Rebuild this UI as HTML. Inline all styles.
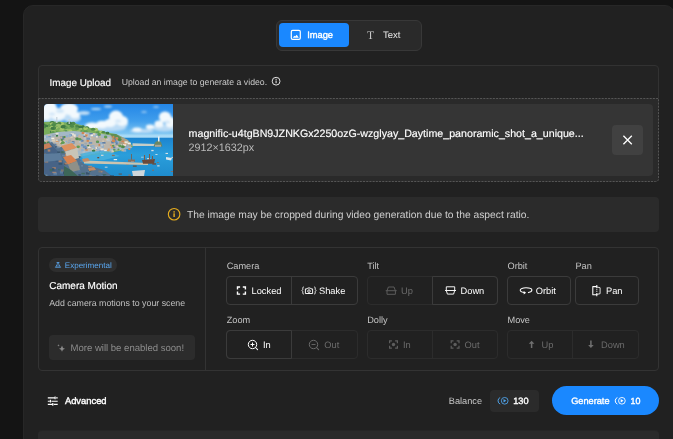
<!DOCTYPE html>
<html lang="en">
<head>
<meta charset="utf-8">
<title>Image to Video</title>
<style>
*{box-sizing:border-box;margin:0;padding:0}
html,body{width:673px;height:439px;overflow:hidden;background:#141414}
body{position:relative;font-family:"Liberation Sans",sans-serif;color:#fff;-webkit-font-smoothing:antialiased;text-rendering:geometricPrecision}
#root{position:absolute;left:0;top:0;width:673px;height:439px;will-change:transform}
.abs{position:absolute}
.t{position:absolute;white-space:nowrap;line-height:14px;height:14px;margin-top:-7px}
#panel{left:23px;top:5px;width:652px;height:450px;background:#212121;border:1px solid #272727;border-radius:10px}
#toggle{left:276px;top:20px;width:146px;height:31px;background:#2a2a2a;border:1px solid #383838;border-radius:6px}
#tg-img{left:279px;top:23px;width:70px;height:24px;background:#1a88ff;border-radius:4px}
#upl{left:38px;top:65px;width:621px;height:117px;border:1px solid #323232;border-radius:4px;background:#232323}
#drop{left:38px;top:98px;width:621px;height:84px;border-radius:0 0 4px 4px;background:#2a2a2a}
#file{left:44px;top:104px;width:609px;height:72px;background:#353535;border-radius:4px;overflow:hidden}
#close{left:612px;top:125px;width:31px;height:30px;background:#414141;border-radius:4px}
#warn{left:38px;top:197px;width:621px;height:35px;background:#2b2b2b;border-radius:4px}
#cam{left:38px;top:247px;width:621px;height:124px;border:1px solid #333;border-radius:4px}
#camdiv{left:205px;top:247px;width:1px;height:124px;background:#333}
#pill{left:49px;top:258px;width:68px;height:14px;background:#2e2e2e;border-radius:7px}
#more{left:49px;top:335px;width:146px;height:25px;background:#2c2c2c;border-radius:4px}
.grp{position:absolute;height:29px;border:1px solid #3b3b3b;border-radius:4px}
.grp.dis{border-color:#2c2c2c}
.m{-webkit-text-stroke:0.15px currentColor}
.sb{-webkit-text-stroke:0.38px currentColor}
.lbl{color:#c4c4c4;font-size:9.2px}
.bt{font-size:9.3px;color:#fff}
.bt.d{color:#6b6b6b}
#bal{left:490px;top:390px;width:49px;height:22px;background:#2b2b2b;border-radius:4px}
#gen{left:552px;top:386px;width:107px;height:29px;background:#1a88ff;border-radius:15px}
#next{left:38px;top:430px;width:621px;height:20px;background:#2a2a2a;border-top:1px solid #252525;border-radius:4px}
</style>
</head>
<body>
<div id="root">
<div id="panel" class="abs"></div>

<div id="toggle" class="abs"></div>
<div id="tg-img" class="abs"></div>
<span class="t sb" style="left:307.2px;top:34.5px;font-size:9.3px">Image</span>
<span class="t" style="left:383px;top:35.5px;font-size:9.5px;color:#e6e6e6">Text</span>

<div id="upl" class="abs"></div>
<div id="drop" class="abs"></div>
<svg class="abs" style="left:38px;top:98px" width="621" height="84" viewBox="0 0 621 84" fill="none"><path d="M0.5 0.5 H620.5 V80.5 Q620.5 83.5 617.5 83.5 H3.5 Q0.5 83.5 0.5 80.5Z" stroke="#555" stroke-width="1" stroke-dasharray="2 1.2"/></svg>
<span class="t m" style="left:49.5px;top:83.5px;font-size:9.9px">Image Upload</span>
<span class="t" style="left:121.7px;top:82.3px;font-size:8.72px;color:#c9c9c9">Upload an image to generate a video.</span>

<div id="file" class="abs">
<svg class="abs" style="left:0;top:0" width="129" height="72" viewBox="0 0 129 72">
<defs>
<linearGradient id="sky" x1="0" y1="0" x2="0" y2="1"><stop offset="0" stop-color="#2486e6"/><stop offset="0.5" stop-color="#409eec"/><stop offset="0.85" stop-color="#7cc4f2"/><stop offset="1" stop-color="#a4daf6"/></linearGradient>
<linearGradient id="sea" x1="0" y1="0" x2="0" y2="1"><stop offset="0" stop-color="#1c84d0"/><stop offset="0.45" stop-color="#2a9edb"/><stop offset="1" stop-color="#1f8ccd"/></linearGradient>
<filter id="b1" x="-20%" y="-20%" width="140%" height="140%"><feGaussianBlur stdDeviation="0.8"/></filter>
<filter id="b2" x="-20%" y="-20%" width="140%" height="140%"><feGaussianBlur stdDeviation="0.4"/></filter>
</defs>
<rect width="129" height="34" fill="url(#sky)"/>
<rect y="33.6" width="129" height="38.4" fill="url(#sea)"/>
<g filter="url(#b1)">
<g fill="#bcdcf5">
<ellipse cx="8" cy="14" rx="13" ry="5"/><ellipse cx="28" cy="14" rx="9" ry="4.5"/><ellipse cx="40" cy="9" rx="6" ry="2"/>
<ellipse cx="62" cy="24" rx="20" ry="3.5"/><ellipse cx="74" cy="20" rx="10" ry="5"/><ellipse cx="52" cy="5" rx="5" ry="1"/><ellipse cx="64" cy="2.5" rx="4" ry="1"/>
<ellipse cx="120" cy="24" rx="12" ry="3.5"/><ellipse cx="98" cy="27" rx="12" ry="2"/><ellipse cx="100" cy="8" rx="3" ry=".8"/><ellipse cx="112" cy="3" rx="3" ry=".8"/>
</g>
<g fill="#f3f9fd">
<ellipse cx="5" cy="5" rx="8" ry="8"/><ellipse cx="14" cy="10" rx="8" ry="6"/><ellipse cx="25" cy="5" rx="9" ry="6"/><ellipse cx="31" cy="11" rx="5" ry="3.5"/><ellipse cx="2" cy="12" rx="5" ry="4"/>
<ellipse cx="72" cy="13" rx="7" ry="6.5"/><ellipse cx="78" cy="17" rx="6" ry="5"/><ellipse cx="66" cy="19" rx="6" ry="4"/><ellipse cx="58" cy="20.5" rx="6" ry="3.8"/><ellipse cx="48" cy="22" rx="7" ry="3.6"/>
<ellipse cx="121" cy="13" rx="6" ry="5.5"/><ellipse cx="126" cy="18" rx="5" ry="5.5"/><ellipse cx="115" cy="20" rx="4.5" ry="3.5"/><ellipse cx="106" cy="23" rx="4" ry="2.4"/><ellipse cx="93" cy="25.5" rx="4.5" ry="2"/>
</g>
<g fill="#c9e2f6" opacity=".8"><ellipse cx="16" cy="7" rx="4" ry="2"/><ellipse cx="8" cy="10" rx="3" ry="1.6"/><ellipse cx="74" cy="17" rx="3" ry="1.6"/><ellipse cx="123" cy="18" rx="3" ry="1.5"/></g>
</g>
<g filter="url(#b2)">
<rect x="60" y="30.5" width="69" height="3" fill="#b4e0f7" opacity=".6"/>
<path d="M0 18 L10 17.5 L30 19 L40 22 L50 25 L60 28 L72 30 L80 34 L86 38 L89 43 L80 46 L60 50 L40 52 L0 55Z" fill="#7aad5c"/>
<ellipse cx="32.9" cy="23.2" rx="2.1" ry="1.5" fill="#6daa5a"/><ellipse cx="39.5" cy="23.1" rx="1.6" ry="1.1" fill="#96bc68"/><ellipse cx="58.7" cy="29.8" rx="1.8" ry="1.2" fill="#96bc68"/><ellipse cx="8.2" cy="18.7" rx="2.5" ry="1.8" fill="#3f7a44"/><ellipse cx="36.8" cy="23.5" rx="2.5" ry="1.7" fill="#3f7a44"/><ellipse cx="43.1" cy="23.5" rx="1.7" ry="1.2" fill="#3f7a44"/><ellipse cx="8.7" cy="23.7" rx="1.9" ry="1.3" fill="#96bc68"/><ellipse cx="38.1" cy="26.9" rx="2.5" ry="1.8" fill="#4f8a4a"/><ellipse cx="38.2" cy="25.5" rx="1.4" ry="1.0" fill="#6daa5a"/><ellipse cx="0.0" cy="20.7" rx="1.6" ry="1.1" fill="#3f7a44"/><ellipse cx="12.0" cy="23.6" rx="1.8" ry="1.3" fill="#a8c86c"/><ellipse cx="27.8" cy="22.3" rx="2.0" ry="1.4" fill="#4f8a4a"/><ellipse cx="21.4" cy="23.8" rx="1.6" ry="1.1" fill="#3f7a44"/><ellipse cx="14.5" cy="21.4" rx="2.5" ry="1.7" fill="#4f8a4a"/><ellipse cx="24.8" cy="24.1" rx="1.4" ry="1.0" fill="#6daa5a"/><ellipse cx="7.4" cy="27.9" rx="1.6" ry="1.1" fill="#3f7a44"/><ellipse cx="9.4" cy="27.4" rx="2.5" ry="1.8" fill="#96bc68"/><ellipse cx="29.1" cy="19.5" rx="2.4" ry="1.7" fill="#4f8a4a"/><ellipse cx="12.7" cy="20.5" rx="2.1" ry="1.5" fill="#3f7a44"/><ellipse cx="26.1" cy="26.9" rx="2.4" ry="1.7" fill="#a8c86c"/><ellipse cx="15.8" cy="19.0" rx="2.1" ry="1.5" fill="#96bc68"/><ellipse cx="37.0" cy="25.0" rx="1.3" ry="0.9" fill="#a8c86c"/><ellipse cx="41.1" cy="25.1" rx="1.8" ry="1.3" fill="#a8c86c"/><ellipse cx="6.1" cy="21.3" rx="2.3" ry="1.6" fill="#5f9a52"/><ellipse cx="12.6" cy="28.0" rx="1.2" ry="0.9" fill="#5f9a52"/><ellipse cx="38.9" cy="26.7" rx="1.7" ry="1.2" fill="#6daa5a"/><ellipse cx="7.8" cy="23.5" rx="2.1" ry="1.5" fill="#a8c86c"/><ellipse cx="54.1" cy="28.8" rx="2.3" ry="1.6" fill="#5f9a52"/><ellipse cx="18.2" cy="25.2" rx="2.4" ry="1.7" fill="#a8c86c"/><ellipse cx="41.8" cy="27.7" rx="2.0" ry="1.4" fill="#5f9a52"/><ellipse cx="22.8" cy="26.1" rx="2.1" ry="1.4" fill="#96bc68"/><ellipse cx="8.0" cy="19.7" rx="2.1" ry="1.5" fill="#a8c86c"/><ellipse cx="10.2" cy="21.7" rx="1.3" ry="0.9" fill="#3f7a44"/><ellipse cx="57.4" cy="28.1" rx="2.3" ry="1.6" fill="#a8c86c"/><ellipse cx="34.9" cy="26.8" rx="1.9" ry="1.3" fill="#96bc68"/><ellipse cx="17.8" cy="19.4" rx="2.2" ry="1.5" fill="#a8c86c"/><ellipse cx="28.7" cy="22.5" rx="1.5" ry="1.1" fill="#4f8a4a"/><ellipse cx="9.0" cy="28.3" rx="2.0" ry="1.4" fill="#5f9a52"/><ellipse cx="10.1" cy="23.8" rx="2.2" ry="1.6" fill="#4f8a4a"/><ellipse cx="0.2" cy="23.1" rx="1.9" ry="1.4" fill="#4f8a4a"/><ellipse cx="27.5" cy="21.5" rx="1.8" ry="1.3" fill="#4f8a4a"/><ellipse cx="15.9" cy="21.6" rx="2.5" ry="1.8" fill="#a8c86c"/><ellipse cx="15.3" cy="19.4" rx="2.0" ry="1.4" fill="#4f8a4a"/><ellipse cx="51.6" cy="25.5" rx="2.5" ry="1.7" fill="#a8c86c"/><ellipse cx="14.9" cy="22.7" rx="1.3" ry="0.9" fill="#96bc68"/><ellipse cx="24.3" cy="19.8" rx="2.0" ry="1.4" fill="#5f9a52"/><ellipse cx="33.6" cy="23.0" rx="2.0" ry="1.4" fill="#3f7a44"/><ellipse cx="33.1" cy="24.4" rx="2.1" ry="1.5" fill="#5f9a52"/><ellipse cx="12.7" cy="20.9" rx="1.8" ry="1.2" fill="#6daa5a"/><ellipse cx="25.3" cy="19.3" rx="2.5" ry="1.8" fill="#3f7a44"/><ellipse cx="9.6" cy="20.6" rx="2.4" ry="1.7" fill="#4f8a4a"/><ellipse cx="1.4" cy="21.8" rx="1.7" ry="1.2" fill="#4f8a4a"/><ellipse cx="42.6" cy="24.3" rx="1.5" ry="1.0" fill="#a8c86c"/><ellipse cx="21.9" cy="23.4" rx="2.0" ry="1.4" fill="#5f9a52"/><ellipse cx="36.2" cy="25.2" rx="1.6" ry="1.1" fill="#96bc68"/><ellipse cx="14.3" cy="21.2" rx="2.2" ry="1.5" fill="#96bc68"/><ellipse cx="9.6" cy="24.8" rx="1.7" ry="1.2" fill="#4f8a4a"/><ellipse cx="20.4" cy="22.2" rx="1.5" ry="1.1" fill="#4f8a4a"/><ellipse cx="59.4" cy="28.2" rx="1.9" ry="1.3" fill="#4f8a4a"/><ellipse cx="20.9" cy="27.1" rx="2.5" ry="1.7" fill="#5f9a52"/><ellipse cx="39.1" cy="22.3" rx="1.4" ry="1.0" fill="#3f7a44"/><ellipse cx="16.4" cy="26.5" rx="1.3" ry="0.9" fill="#96bc68"/><ellipse cx="8.4" cy="24.4" rx="1.9" ry="1.3" fill="#3f7a44"/><ellipse cx="19.9" cy="27.6" rx="1.5" ry="1.1" fill="#96bc68"/><ellipse cx="63.5" cy="29.1" rx="1.9" ry="1.3" fill="#3f7a44"/><ellipse cx="49.1" cy="25.3" rx="2.2" ry="1.5" fill="#4f8a4a"/><ellipse cx="19.0" cy="22.7" rx="2.4" ry="1.7" fill="#3f7a44"/><ellipse cx="32.8" cy="21.9" rx="1.6" ry="1.1" fill="#4f8a4a"/><ellipse cx="2.5" cy="21.9" rx="1.7" ry="1.2" fill="#3f7a44"/><ellipse cx="18.3" cy="27.0" rx="1.5" ry="1.0" fill="#96bc68"/>
<path d="M0 31 L14 28 L30 27 L45 28.5 L58 30 L68 31.5 L78 35 L85 39 L88 44 L70 47 L52 49 L40 52 L0 52Z" fill="#a4b8c6"/>
<path d="M8 33 L26 31 L40 32 L60 34 L75 37 L82 42 L60 46 L40 47 L10 44Z" fill="#c4b49e" opacity=".7"/>
<path d="M66 30.5 L74 31 L84 36 L88 42 L78 44 L70 40Z" fill="#a9a28c"/>
<path d="M66 30 l6 0 l6 4 l-8 1z" fill="#5f8f55"/>
<rect x="39.8" y="41.0" width="3.4" height="1.9" fill="#9aa9b4"/><rect x="70.7" y="38.9" width="2.8" height="1.5" fill="#f2efe8"/><rect x="26.7" y="29.3" width="3.2" height="2.2" fill="#e9e4d8"/><rect x="52.4" y="36.9" width="2.5" height="2.2" fill="#5f7fa6"/><rect x="16.7" y="33.0" width="1.7" height="1.8" fill="#f2efe8"/><rect x="52.0" y="31.9" width="2.1" height="1.6" fill="#e9e4d8"/><rect x="58.3" y="38.4" width="2.2" height="2.6" fill="#d9cdb8"/><rect x="62.3" y="34.9" width="2.1" height="1.6" fill="#d9cdb8"/><rect x="49.6" y="29.7" width="1.8" height="1.6" fill="#d9cdb8"/><rect x="0.0" y="32.2" width="3.4" height="1.9" fill="#b8c4cc"/><rect x="36.9" y="41.2" width="2.0" height="2.1" fill="#8fb0cf"/><rect x="7.7" y="35.3" width="3.5" height="2.3" fill="#d9cdb8"/><rect x="1.0" y="38.6" width="2.6" height="2.2" fill="#d99660"/><rect x="39.4" y="31.8" width="3.1" height="1.4" fill="#5f7fa6"/><rect x="33.8" y="36.9" width="3.6" height="1.2" fill="#c9b59a"/><rect x="18.5" y="36.9" width="3.3" height="2.1" fill="#d9cdb8"/><rect x="3.7" y="30.7" width="2.5" height="1.2" fill="#c9b59a"/><rect x="28.9" y="34.4" width="1.7" height="1.3" fill="#c9b59a"/><rect x="32.4" y="42.6" width="1.9" height="2.0" fill="#c9b59a"/><rect x="11.9" y="36.7" width="2.9" height="1.6" fill="#d99660"/><rect x="72.0" y="33.2" width="2.0" height="2.2" fill="#9aa9b4"/><rect x="77.6" y="42.1" width="2.4" height="1.3" fill="#e9e4d8"/><rect x="45.1" y="33.4" width="3.1" height="1.7" fill="#b8c4cc"/><rect x="72.5" y="41.9" width="2.2" height="1.4" fill="#d9cdb8"/><rect x="11.1" y="39.0" width="2.9" height="2.1" fill="#d9cdb8"/><rect x="23.7" y="38.1" width="1.7" height="1.4" fill="#8fb0cf"/><rect x="8.1" y="30.5" width="2.5" height="1.7" fill="#9aa9b4"/><rect x="51.4" y="30.5" width="1.7" height="1.2" fill="#8fb0cf"/><rect x="1.9" y="42.9" width="2.6" height="2.2" fill="#8fb0cf"/><rect x="12.0" y="28.8" width="2.5" height="1.7" fill="#e9e4d8"/><rect x="79.2" y="45.4" width="3.0" height="2.3" fill="#8fb0cf"/><rect x="31.0" y="44.1" width="3.4" height="2.4" fill="#b8c4cc"/><rect x="58.3" y="36.5" width="1.6" height="1.3" fill="#d9cdb8"/><rect x="77.4" y="45.2" width="2.4" height="2.2" fill="#c9b59a"/><rect x="40.3" y="38.6" width="2.7" height="1.9" fill="#9aa9b4"/><rect x="2.6" y="42.0" width="2.6" height="1.5" fill="#d9cdb8"/><rect x="43.8" y="42.4" width="3.4" height="1.6" fill="#e9e4d8"/><rect x="32.4" y="30.6" width="2.8" height="1.9" fill="#8fb0cf"/><rect x="58.1" y="38.0" width="3.4" height="1.7" fill="#5f7fa6"/><rect x="22.1" y="42.9" width="3.2" height="2.3" fill="#d99660"/><rect x="77.5" y="36.6" width="2.8" height="1.6" fill="#cf8554"/><rect x="11.8" y="35.8" width="3.4" height="1.3" fill="#d9cdb8"/><rect x="14.9" y="38.3" width="2.2" height="1.5" fill="#b8c4cc"/><rect x="33.7" y="40.0" width="2.9" height="2.2" fill="#c9b59a"/><rect x="39.8" y="28.9" width="1.7" height="2.4" fill="#e9e4d8"/><rect x="59.7" y="34.0" width="2.3" height="2.1" fill="#c9b59a"/><rect x="55.4" y="38.2" width="2.9" height="2.1" fill="#8fb0cf"/><rect x="84.3" y="44.1" width="2.0" height="1.9" fill="#cf8554"/><rect x="62.9" y="45.9" width="2.7" height="1.3" fill="#d99660"/><rect x="24.0" y="35.6" width="3.0" height="1.9" fill="#c9b59a"/><rect x="74.7" y="44.5" width="2.0" height="1.8" fill="#b8c4cc"/><rect x="11.4" y="38.3" width="2.9" height="2.5" fill="#b8c4cc"/><rect x="48.4" y="43.3" width="2.6" height="2.3" fill="#8fb0cf"/><rect x="40.8" y="43.3" width="2.0" height="2.2" fill="#5f7fa6"/><rect x="21.3" y="36.8" width="1.8" height="1.6" fill="#8fb0cf"/><rect x="1.4" y="39.6" width="1.7" height="1.7" fill="#b8c4cc"/><rect x="67.6" y="39.2" width="1.7" height="2.3" fill="#d9cdb8"/><rect x="37.7" y="27.9" width="2.7" height="2.2" fill="#cf8554"/><rect x="79.2" y="40.0" width="3.0" height="1.8" fill="#f2efe8"/><rect x="50.9" y="44.2" width="3.1" height="1.8" fill="#9aa9b4"/><rect x="56.2" y="40.1" width="3.3" height="2.0" fill="#6f93bd"/><rect x="76.6" y="42.2" width="2.2" height="1.4" fill="#9aa9b4"/><rect x="46.1" y="41.3" width="2.0" height="2.0" fill="#9aa9b4"/><rect x="0.4" y="36.4" width="2.7" height="1.3" fill="#b8c4cc"/><rect x="10.7" y="29.3" width="1.9" height="2.5" fill="#f2efe8"/><rect x="41.6" y="30.2" width="2.5" height="2.3" fill="#f2efe8"/><rect x="46.2" y="29.7" width="2.4" height="1.2" fill="#6f93bd"/><rect x="2.0" y="31.9" width="2.1" height="2.2" fill="#8fb0cf"/><rect x="63.7" y="33.1" width="2.6" height="1.9" fill="#c9b59a"/><rect x="10.8" y="39.8" width="2.1" height="1.5" fill="#9aa9b4"/><rect x="55.7" y="47.6" width="2.8" height="2.0" fill="#5f7fa6"/><rect x="47.0" y="32.5" width="2.0" height="2.0" fill="#c9b59a"/><rect x="65.2" y="47.3" width="3.4" height="1.6" fill="#8fb0cf"/><rect x="68.5" y="31.9" width="1.8" height="2.4" fill="#cf8554"/><rect x="63.9" y="33.5" width="1.8" height="2.4" fill="#b8c4cc"/><rect x="47.8" y="44.6" width="2.0" height="2.1" fill="#e9e4d8"/><rect x="8.5" y="41.2" width="2.3" height="2.3" fill="#8fb0cf"/><rect x="10.2" y="39.6" width="3.1" height="1.9" fill="#5f7fa6"/><rect x="67.1" y="42.3" width="3.4" height="1.9" fill="#d99660"/><rect x="16.2" y="32.1" width="3.3" height="2.6" fill="#5f7fa6"/><rect x="83.7" y="38.6" width="3.1" height="1.7" fill="#f2efe8"/><rect x="37.5" y="35.9" width="2.0" height="1.7" fill="#5f7fa6"/><rect x="16.0" y="38.3" width="3.1" height="1.8" fill="#d99660"/><rect x="69.7" y="35.1" width="1.8" height="2.4" fill="#5f7fa6"/><rect x="82.7" y="41.2" width="2.0" height="2.0" fill="#8fb0cf"/><rect x="70.8" y="33.5" width="3.4" height="2.2" fill="#cf8554"/><rect x="71.7" y="37.1" width="3.4" height="2.4" fill="#8fb0cf"/><rect x="67.5" y="46.1" width="2.4" height="2.2" fill="#d9cdb8"/><rect x="70.2" y="34.5" width="1.8" height="2.4" fill="#5f7fa6"/><rect x="26.3" y="32.4" width="2.4" height="1.5" fill="#d9cdb8"/><rect x="56.5" y="44.5" width="3.1" height="2.6" fill="#e9e4d8"/><rect x="10.1" y="29.7" width="2.1" height="1.8" fill="#9aa9b4"/><rect x="4.4" y="31.9" width="2.4" height="1.3" fill="#6f93bd"/><rect x="24.3" y="35.5" width="2.7" height="1.8" fill="#9aa9b4"/><rect x="56.1" y="47.2" width="1.8" height="2.0" fill="#e9e4d8"/><rect x="75.3" y="40.5" width="2.8" height="1.8" fill="#f2efe8"/><rect x="37.0" y="40.2" width="2.8" height="1.7" fill="#6f93bd"/><rect x="42.5" y="33.7" width="3.5" height="2.1" fill="#6f93bd"/><rect x="51.6" y="42.8" width="2.4" height="2.2" fill="#e9e4d8"/><rect x="79.7" y="37.7" width="2.6" height="2.6" fill="#d99660"/><rect x="4.4" y="37.4" width="1.8" height="2.4" fill="#8fb0cf"/><rect x="46.5" y="30.1" width="2.5" height="2.1" fill="#f2efe8"/><rect x="52.9" y="43.0" width="3.0" height="1.7" fill="#9aa9b4"/><rect x="25.5" y="30.2" width="2.6" height="1.9" fill="#6f93bd"/><rect x="69.0" y="42.6" width="2.3" height="1.6" fill="#5f7fa6"/><rect x="63.8" y="44.5" width="2.0" height="1.6" fill="#d99660"/><rect x="16.7" y="33.2" width="3.6" height="2.5" fill="#5f7fa6"/><rect x="23.8" y="37.6" width="2.8" height="1.3" fill="#9aa9b4"/><rect x="42.6" y="35.9" width="2.3" height="1.9" fill="#cf8554"/><rect x="54.9" y="46.2" width="2.0" height="1.8" fill="#6f93bd"/><rect x="34.3" y="30.8" width="1.9" height="2.4" fill="#c9b59a"/><rect x="28.6" y="40.7" width="3.1" height="2.5" fill="#b8c4cc"/><rect x="57.5" y="41.5" width="2.5" height="1.7" fill="#9aa9b4"/><rect x="7.3" y="41.1" width="2.6" height="2.2" fill="#6f93bd"/><rect x="53.1" y="44.4" width="2.6" height="2.3" fill="#8fb0cf"/><rect x="24.9" y="30.6" width="2.3" height="2.2" fill="#8fb0cf"/><rect x="38.8" y="41.9" width="3.4" height="2.2" fill="#6f93bd"/><rect x="38.5" y="47.1" width="2.2" height="1.6" fill="#b8c4cc"/><rect x="45.4" y="29.1" width="3.3" height="1.2" fill="#5f7fa6"/><rect x="34.8" y="36.7" width="2.0" height="2.0" fill="#b8c4cc"/><rect x="47.6" y="47.9" width="2.7" height="1.4" fill="#f2efe8"/><rect x="2.0" y="39.9" width="2.7" height="2.0" fill="#e9e4d8"/><rect x="57.3" y="47.1" width="1.7" height="2.0" fill="#9aa9b4"/><rect x="7.5" y="42.9" width="1.9" height="2.2" fill="#5f7fa6"/><rect x="37.1" y="44.8" width="2.6" height="2.5" fill="#8fb0cf"/><rect x="67.3" y="36.9" width="2.3" height="2.6" fill="#5f7fa6"/><rect x="12.0" y="39.2" width="3.2" height="1.3" fill="#c9b59a"/><rect x="80.5" y="37.3" width="3.3" height="2.1" fill="#e9e4d8"/><rect x="56.3" y="40.1" width="3.0" height="2.3" fill="#b8c4cc"/><rect x="21.6" y="31.1" width="2.9" height="2.2" fill="#8fb0cf"/><rect x="18.0" y="37.6" width="2.2" height="2.6" fill="#e9e4d8"/><rect x="41.5" y="45.3" width="2.2" height="1.4" fill="#cf8554"/><rect x="1.5" y="39.0" width="3.2" height="1.6" fill="#d99660"/><rect x="16.2" y="32.4" width="2.1" height="2.2" fill="#c9b59a"/><rect x="44.8" y="38.0" width="3.4" height="1.8" fill="#6f93bd"/><rect x="48.4" y="48.3" width="2.6" height="1.8" fill="#8fb0cf"/><rect x="58.1" y="46.3" width="1.8" height="2.4" fill="#b8c4cc"/><rect x="70.5" y="36.6" width="2.7" height="1.9" fill="#6f93bd"/><rect x="39.6" y="33.2" width="2.4" height="2.4" fill="#b8c4cc"/><rect x="13.8" y="35.0" width="2.1" height="2.4" fill="#9aa9b4"/><rect x="54.5" y="39.9" width="1.7" height="2.0" fill="#cf8554"/><rect x="7.3" y="33.7" width="3.0" height="1.3" fill="#f2efe8"/><rect x="65.9" y="40.6" width="2.6" height="1.2" fill="#d99660"/><rect x="36.7" y="49.9" width="1.8" height="2.4" fill="#d99660"/><rect x="3.3" y="37.3" width="2.6" height="2.5" fill="#6f93bd"/><rect x="27.8" y="37.1" width="2.7" height="2.6" fill="#5f7fa6"/><rect x="62.9" y="36.0" width="3.0" height="1.3" fill="#b8c4cc"/><rect x="59.5" y="45.7" width="3.2" height="1.4" fill="#f2efe8"/><rect x="1.1" y="36.4" width="3.0" height="1.5" fill="#c9b59a"/><rect x="48.9" y="29.2" width="2.0" height="1.7" fill="#d9cdb8"/><rect x="49.5" y="45.1" width="2.3" height="2.4" fill="#d9cdb8"/><rect x="9.0" y="42.5" width="1.9" height="2.1" fill="#cf8554"/><rect x="15.8" y="37.1" width="3.3" height="2.0" fill="#d9cdb8"/><rect x="67.9" y="35.5" width="3.2" height="2.5" fill="#cf8554"/><rect x="57.0" y="46.2" width="3.2" height="1.7" fill="#8fb0cf"/><rect x="81.1" y="42.6" width="3.1" height="2.1" fill="#8fb0cf"/><rect x="58.1" y="42.2" width="1.6" height="1.7" fill="#8fb0cf"/><rect x="27.0" y="38.0" width="2.7" height="1.5" fill="#8fb0cf"/><rect x="53.8" y="31.0" width="3.1" height="2.5" fill="#9aa9b4"/><rect x="20.6" y="42.3" width="2.6" height="2.0" fill="#d99660"/><rect x="55.2" y="31.9" width="1.8" height="1.5" fill="#c9b59a"/><rect x="36.7" y="35.3" width="1.8" height="2.4" fill="#6f93bd"/><rect x="40.7" y="30.1" width="3.5" height="1.4" fill="#c9b59a"/><rect x="47.8" y="41.0" width="2.7" height="1.6" fill="#8fb0cf"/><rect x="52.9" y="30.1" width="3.2" height="1.6" fill="#8fb0cf"/><rect x="21.2" y="41.3" width="3.3" height="1.5" fill="#9aa9b4"/><rect x="71.4" y="38.4" width="2.4" height="2.3" fill="#5f7fa6"/><rect x="54.1" y="43.0" width="3.1" height="1.4" fill="#b8c4cc"/><rect x="41.2" y="30.6" width="2.4" height="2.0" fill="#cf8554"/><rect x="29.6" y="30.3" width="2.1" height="2.5" fill="#e9e4d8"/>
<ellipse cx="33.1" cy="34.8" rx="1.9" ry="1.5" fill="#4f8a4a"/><ellipse cx="49.6" cy="46.8" rx="1.8" ry="1.4" fill="#3f7a44"/><ellipse cx="4.1" cy="38.9" rx="1.6" ry="1.3" fill="#4f8a4a"/><ellipse cx="75.7" cy="35.6" rx="1.9" ry="1.5" fill="#4f8a4a"/><ellipse cx="69.1" cy="41.7" rx="1.3" ry="1.0" fill="#5f9a52"/><ellipse cx="12.9" cy="31.8" rx="1.2" ry="1.0" fill="#3f7a44"/><ellipse cx="18.9" cy="38.4" rx="1.9" ry="1.5" fill="#5f9a52"/><ellipse cx="0.3" cy="38.9" rx="1.8" ry="1.5" fill="#3f7a44"/><ellipse cx="76.0" cy="41.8" rx="1.8" ry="1.4" fill="#5f9a52"/><ellipse cx="29.8" cy="45.7" rx="1.3" ry="1.1" fill="#3f7a44"/><ellipse cx="17.9" cy="35.9" rx="1.2" ry="0.9" fill="#4f8a4a"/><ellipse cx="53.5" cy="37.8" rx="1.6" ry="1.3" fill="#5f9a52"/><ellipse cx="35.7" cy="35.3" rx="1.7" ry="1.3" fill="#5f9a52"/><ellipse cx="20.4" cy="33.0" rx="1.3" ry="1.1" fill="#4f8a4a"/><ellipse cx="78.9" cy="42.8" rx="1.9" ry="1.5" fill="#4f8a4a"/><ellipse cx="70.3" cy="45.7" rx="1.3" ry="1.0" fill="#5f9a52"/><ellipse cx="44.1" cy="41.6" rx="1.0" ry="0.8" fill="#3f7a44"/><ellipse cx="74.5" cy="45.4" rx="1.1" ry="0.8" fill="#5f9a52"/><ellipse cx="34.2" cy="42.8" rx="1.7" ry="1.4" fill="#5f9a52"/><ellipse cx="61.6" cy="33.0" rx="1.7" ry="1.4" fill="#5f9a52"/><ellipse cx="17.6" cy="39.3" rx="1.1" ry="0.9" fill="#5f9a52"/><ellipse cx="55.1" cy="30.5" rx="1.7" ry="1.4" fill="#5f9a52"/>
<rect x="12.2" y="13" width="1.2" height="6" fill="#c8d4dc"/><rect x="24.6" y="15" width="1.2" height="5" fill="#c8d4dc"/>
<path d="M88.5 39.3 L112 40 L113 42 L88.5 42Z" fill="#c4cdc8"/>
<path d="M109.5 42.6 L111 38.5 L114 36.5 L117 38 L118.5 42.6Z" fill="#6a8766"/>
<path d="M111 42.8 l6 0 l0 -2 l-6 0z" fill="#a8a69a"/>
<rect x="114" y="32.5" width="1.5" height="5" fill="#eef2f4"/>
<path d="M36 50 Q50 46 64 47.5 L76 52 L60 56 L40 57Z" fill="#48b2de" opacity=".85"/>
<rect x="103.1" y="54.1" width="3.2" height="1.2" fill="#d8e2e6"/><rect x="121.5" y="48.9" width="2.5" height="1.1" fill="#d8e2e6"/><rect x="57.0" y="50.7" width="2.5" height="1.3" fill="#c9d3d6"/><rect x="60.8" y="62.7" width="2.7" height="1.0" fill="#c9d3d6"/><rect x="87.0" y="56.5" width="2.9" height="1.3" fill="#e8eef0"/><rect x="113.2" y="61.2" width="2.4" height="1.3" fill="#c9d3d6"/><rect x="82.0" y="59.5" width="2.7" height="1.2" fill="#8a6e5c"/><rect x="84.4" y="70.5" width="2.3" height="1.2" fill="#8a6e5c"/><rect x="97.1" y="52.8" width="2.5" height="0.7" fill="#d8e2e6"/><rect x="111.4" y="50.1" width="2.1" height="0.8" fill="#e8eef0"/><rect x="78.8" y="57.9" width="2.5" height="0.8" fill="#8a6e5c"/><rect x="107.3" y="45.9" width="2.3" height="1.3" fill="#d8e2e6"/><rect x="127.4" y="52.9" width="1.9" height="1.0" fill="#c9d3d6"/><rect x="108.2" y="65.6" width="1.7" height="1.2" fill="#8a6e5c"/><rect x="126.8" y="67.1" width="3.3" height="0.9" fill="#8a6e5c"/><rect x="108.3" y="59.3" width="3.7" height="1.3" fill="#6a4a3a"/><rect x="74.6" y="69.6" width="3.3" height="0.9" fill="#6a4a3a"/><rect x="53.3" y="53.0" width="1.9" height="1.3" fill="#6a4a3a"/><rect x="68.1" y="58.7" width="2.2" height="0.8" fill="#d8e2e6"/><rect x="67.9" y="50.8" width="2.8" height="1.3" fill="#8a6e5c"/><rect x="113.0" y="58.2" width="1.8" height="0.8" fill="#8a6e5c"/><rect x="88.9" y="61.5" width="3.8" height="1.2" fill="#6a4a3a"/><rect x="69.7" y="55.0" width="3.4" height="1.2" fill="#e8eef0"/>
<path d="M40 56.5 L104 59 L104 61 L40 59.5Z" fill="#cbc4b0"/>
<path d="M98 56 L111 55 L110 59.8 L99 59.8Z" fill="#6a4a3a"/>
<path d="M100 51 h1 v5 h-1z M105 50 h1 v6 h-1z M108 52 h1 v4 h-1z M87 50 h.8 v6 h-.8z" fill="#7a5a48"/>
<path d="M84 55.5 h7 v2.2 h-7z" fill="#8a6e5c"/>
<path d="M88 67 l13 -1 l-1 6 l-11 0z" fill="#cfd7db"/>
<path d="M122 53 l6 1 l-1 2.4 l-5 -1z" fill="#dfe6ea"/>
<path d="M0 40 L8 38 L14 44 L20 42 L30 47 L36 55 L40 60 L46 62 L60 66 L68 72 L0 72Z" fill="#54728e"/>
<path d="M0 44 L7 40 L16 50 L19 58 L22 72 L0 72Z" fill="#466486"/>
<rect x="25.6" y="60.8" width="2.1" height="1.5" fill="#3a5474" opacity=".8"/><rect x="32.1" y="61.6" width="3.5" height="2.9" fill="#7f9099" opacity=".8"/><rect x="63.5" y="71.6" width="1.6" height="2.5" fill="#5d7fa3" opacity=".8"/><rect x="24.2" y="56.3" width="3.5" height="1.9" fill="#3a5474" opacity=".8"/><rect x="56.6" y="67.1" width="1.9" height="1.3" fill="#c48a64" opacity=".8"/><rect x="54.4" y="66.5" width="2.2" height="1.9" fill="#8a7a68" opacity=".8"/><rect x="52.0" y="71.4" width="2.5" height="2.4" fill="#2f4a62" opacity=".8"/><rect x="19.2" y="67.5" width="2.6" height="2.7" fill="#2f4a62" opacity=".8"/><rect x="15.5" y="54.4" width="2.4" height="1.7" fill="#3a5474" opacity=".8"/><rect x="0.3" y="49.4" width="1.8" height="2.6" fill="#8a7a68" opacity=".8"/><rect x="32.9" y="52.1" width="3.5" height="1.9" fill="#3a5474" opacity=".8"/><rect x="14.6" y="59.0" width="3.6" height="1.7" fill="#31506a" opacity=".8"/><rect x="11.5" y="42.0" width="1.7" height="1.8" fill="#2f4a62" opacity=".8"/><rect x="21.1" y="55.5" width="1.5" height="1.6" fill="#3f6a58" opacity=".8"/><rect x="0.7" y="55.9" width="3.5" height="2.6" fill="#c48a64" opacity=".8"/><rect x="27.2" y="65.3" width="3.6" height="2.6" fill="#5d7fa3" opacity=".8"/><rect x="0.6" y="42.8" width="2.3" height="2.5" fill="#2f4a62" opacity=".8"/><rect x="44.7" y="65.6" width="2.4" height="2.3" fill="#3f6a58" opacity=".8"/><rect x="18.0" y="45.3" width="2.0" height="1.3" fill="#6b8aa8" opacity=".8"/><rect x="37.1" y="61.1" width="1.9" height="1.4" fill="#6b8aa8" opacity=".8"/><rect x="1.5" y="51.6" width="1.6" height="1.4" fill="#2f4a62" opacity=".8"/><rect x="1.4" y="43.9" width="1.7" height="2.3" fill="#3f6a58" opacity=".8"/><rect x="29.2" y="70.7" width="2.0" height="1.9" fill="#6b8aa8" opacity=".8"/><rect x="26.5" y="69.3" width="3.7" height="2.6" fill="#2f4a62" opacity=".8"/><rect x="41.9" y="68.2" width="3.6" height="2.3" fill="#2f4a62" opacity=".8"/><rect x="8.3" y="63.1" width="3.4" height="2.0" fill="#c48a64" opacity=".8"/><rect x="28.5" y="51.1" width="2.1" height="2.3" fill="#3a5474" opacity=".8"/><rect x="31.9" y="71.8" width="3.3" height="1.8" fill="#c48a64" opacity=".8"/><rect x="15.9" y="66.6" width="3.1" height="2.9" fill="#5d7fa3" opacity=".8"/><rect x="17.0" y="65.4" width="2.6" height="2.2" fill="#8a7a68" opacity=".8"/><rect x="13.3" y="47.5" width="3.1" height="1.3" fill="#2f4a62" opacity=".8"/><rect x="30.0" y="63.7" width="3.7" height="1.3" fill="#c48a64" opacity=".8"/><rect x="37.4" y="68.8" width="3.5" height="1.5" fill="#3f6a58" opacity=".8"/><rect x="12.1" y="49.3" width="3.8" height="2.9" fill="#31506a" opacity=".8"/><rect x="12.4" y="51.2" width="3.6" height="2.3" fill="#c48a64" opacity=".8"/><rect x="4.9" y="71.6" width="2.0" height="2.3" fill="#31506a" opacity=".8"/><rect x="38.1" y="71.8" width="2.4" height="2.7" fill="#3f6a58" opacity=".8"/><rect x="57.4" y="70.2" width="3.1" height="1.6" fill="#31506a" opacity=".8"/><rect x="12.3" y="42.4" width="3.2" height="2.0" fill="#6b8aa8" opacity=".8"/><rect x="18.9" y="46.8" width="2.4" height="2.3" fill="#7f9099" opacity=".8"/><rect x="13.3" y="71.8" width="3.2" height="2.5" fill="#3f6a58" opacity=".8"/><rect x="18.1" y="50.7" width="3.0" height="1.7" fill="#6b8aa8" opacity=".8"/><rect x="34.4" y="70.0" width="2.4" height="2.5" fill="#31506a" opacity=".8"/><rect x="8.4" y="67.8" width="3.9" height="1.3" fill="#c48a64" opacity=".8"/><rect x="15.3" y="54.2" width="2.0" height="1.9" fill="#31506a" opacity=".8"/><rect x="28.5" y="47.6" width="2.6" height="2.9" fill="#7f9099" opacity=".8"/><rect x="25.5" y="58.2" width="3.7" height="1.9" fill="#7f9099" opacity=".8"/><rect x="23.2" y="65.9" width="3.6" height="2.3" fill="#2f4a62" opacity=".8"/><rect x="14.2" y="64.9" width="1.5" height="1.3" fill="#3f6a58" opacity=".8"/><rect x="11.6" y="55.2" width="2.7" height="2.4" fill="#3a5474" opacity=".8"/><rect x="66.0" y="71.2" width="4.0" height="1.9" fill="#31506a" opacity=".8"/><rect x="44.2" y="61.8" width="4.0" height="1.3" fill="#c48a64" opacity=".8"/><rect x="44.6" y="64.9" width="3.8" height="2.1" fill="#31506a" opacity=".8"/><rect x="33.8" y="66.2" width="2.8" height="1.4" fill="#5d7fa3" opacity=".8"/><rect x="0.2" y="70.6" width="3.2" height="2.6" fill="#7f9099" opacity=".8"/><rect x="45.1" y="71.0" width="2.7" height="2.8" fill="#8a7a68" opacity=".8"/><rect x="58.5" y="70.1" width="3.7" height="1.2" fill="#3f6a58" opacity=".8"/><rect x="28.1" y="57.1" width="3.9" height="2.6" fill="#5d7fa3" opacity=".8"/><rect x="20.5" y="55.2" width="1.8" height="2.2" fill="#6b8aa8" opacity=".8"/><rect x="21.0" y="50.0" width="2.1" height="2.3" fill="#c48a64" opacity=".8"/><rect x="3.7" y="45.4" width="2.6" height="2.2" fill="#c48a64" opacity=".8"/><rect x="9.4" y="68.6" width="3.5" height="2.1" fill="#6b8aa8" opacity=".8"/><rect x="27.6" y="58.8" width="3.7" height="2.9" fill="#8a7a68" opacity=".8"/><rect x="20.0" y="59.0" width="2.5" height="2.1" fill="#2f4a62" opacity=".8"/><rect x="43.7" y="66.8" width="1.6" height="1.9" fill="#5d7fa3" opacity=".8"/><rect x="14.6" y="56.2" width="3.1" height="2.0" fill="#c48a64" opacity=".8"/><rect x="13.8" y="71.8" width="2.9" height="1.4" fill="#2f4a62" opacity=".8"/><rect x="5.7" y="64.9" width="2.5" height="2.4" fill="#3f6a58" opacity=".8"/><rect x="35.9" y="56.6" width="2.5" height="1.6" fill="#5d7fa3" opacity=".8"/><rect x="24.5" y="70.3" width="2.8" height="2.1" fill="#3a5474" opacity=".8"/><rect x="25.4" y="58.2" width="1.8" height="2.4" fill="#3f6a58" opacity=".8"/><rect x="20.5" y="58.7" width="3.0" height="1.8" fill="#c48a64" opacity=".8"/><rect x="8.0" y="63.8" width="2.4" height="2.7" fill="#31506a" opacity=".8"/><rect x="17.1" y="47.2" width="3.5" height="2.0" fill="#3f6a58" opacity=".8"/><rect x="27.4" y="47.7" width="3.2" height="1.4" fill="#31506a" opacity=".8"/><rect x="21.6" y="65.9" width="3.5" height="2.4" fill="#3a5474" opacity=".8"/><rect x="9.4" y="49.6" width="3.3" height="2.3" fill="#31506a" opacity=".8"/><rect x="46.2" y="71.4" width="3.8" height="1.3" fill="#5d7fa3" opacity=".8"/><rect x="30.0" y="63.6" width="2.4" height="2.0" fill="#8a7a68" opacity=".8"/><rect x="56.8" y="70.5" width="2.4" height="2.7" fill="#5d7fa3" opacity=".8"/>
<path d="M0 50 L16 49 L19 56 L0 58Z" fill="#5b7c9c"/>
<path d="M17 42 L28 39 L33 44 L21 47.5Z" fill="#dc9260"/>
<path d="M21 47.5 L33 44 L35 54 L24 57Z" fill="#c9c5b8"/>
<path d="M19 53 L27 51 L33 57 L24 60.5Z" fill="#d8824f"/>
<path d="M24 60.5 L33 57 L36 66 L27 68Z" fill="#8f9088"/>
<path d="M0 40.5 L5 39 L8 43 L0 45.5Z" fill="#c98058"/>
<path d="M20 62 L27 66 L34 72 L20 72Z" fill="#3e6658"/>
<path d="M38 55 l6 -1 l2 3 l-7 1z M44 64 l6 -1 l2 3 l-7 1z" fill="#c48a64"/>
</g>
</svg>
</div>
<span class="t m" style="left:188.6px;top:133.5px;font-size:10.67px">magnific-u4tgBN9JZNKGx2250ozG-wzglyay_Daytime_panoramic_shot_a_unique...</span>
<span class="t" style="left:188.6px;top:147.5px;font-size:10.75px;color:#b9b9b9">2912×1632px</span>
<div id="close" class="abs"></div>

<div id="warn" class="abs"></div>
<span class="t" style="left:187px;top:215.5px;font-size:10.28px;color:#d0d0d0">The image may be cropped during video generation due to the aspect ratio.</span>

<div id="cam" class="abs"></div>
<div id="camdiv" class="abs"></div>
<div id="pill" class="abs"></div>
<span class="t" style="left:64.8px;top:266px;font-size:8.04px;color:#5aa8f2">Experimental</span>
<span class="t m" style="left:49.2px;top:286.6px;font-size:10.03px">Camera Motion</span>
<span class="t" style="left:49.2px;top:303.2px;font-size:8.8px;color:#c0c0c0">Add camera motions to your scene</span>
<div id="more" class="abs"></div>
<span class="t" style="left:70.5px;top:349px;font-size:9.55px;color:#8c8c8c">More will be enabled soon!</span>

<span class="t lbl" style="left:226.7px;top:266.4px">Camera</span>
<span class="t lbl" style="left:367.2px;top:266.4px">Tilt</span>
<span class="t lbl" style="left:507.5px;top:266.4px">Orbit</span>
<span class="t lbl" style="left:575.4px;top:266.4px">Pan</span>
<span class="t lbl" style="left:226.7px;top:320.3px">Zoom</span>
<span class="t lbl" style="left:367.2px;top:320.3px">Dolly</span>
<span class="t lbl" style="left:507.5px;top:320.3px">Move</span>

<div class="grp" style="left:226px;top:276px;width:132px"></div>
<div class="grp dis" style="left:367px;top:276px;width:131px"></div>
<div class="grp" style="left:432px;top:276px;width:66px;border-radius:0 4px 4px 0"></div>
<div class="grp" style="left:507px;top:276px;width:64px"></div>
<div class="grp" style="left:575px;top:276px;width:64px"></div>
<div class="grp dis" style="left:226px;top:330px;width:132px"></div>
<div class="grp" style="left:226px;top:330px;width:66px;border-radius:4px 0 0 4px"></div>
<div class="grp dis" style="left:367px;top:330px;width:131px"></div>
<div class="grp dis" style="left:507px;top:330px;width:132px"></div>
<div class="abs" style="left:291px;top:276px;width:1px;height:29px;background:#3b3b3b"></div>
<div class="abs" style="left:432px;top:330px;width:1px;height:29px;background:#2c2c2c"></div>
<div class="abs" style="left:572px;top:330px;width:1px;height:29px;background:#2c2c2c"></div>

<span class="t bt" style="left:251.5px;top:290.5px">Locked</span>
<span class="t bt" style="left:319px;top:290.5px">Shake</span>
<span class="t bt d" style="left:401px;top:290.5px">Up</span>
<span class="t bt" style="left:460.5px;top:290.5px">Down</span>
<span class="t bt" style="left:535.8px;top:290.5px">Orbit</span>
<span class="t bt" style="left:606px;top:290.5px">Pan</span>
<span class="t bt" style="left:263px;top:344.5px">In</span>
<span class="t bt d" style="left:324.3px;top:344.5px">Out</span>
<span class="t bt d" style="left:403px;top:344.5px">In</span>
<span class="t bt d" style="left:464.5px;top:344.5px">Out</span>
<span class="t bt d" style="left:541.5px;top:344.5px">Up</span>
<span class="t bt d" style="left:601px;top:344.5px">Down</span>

<span class="t sb" style="left:64.9px;top:401px;font-size:9.4px">Advanced</span>
<span class="t" style="left:448.8px;top:401px;font-size:9.2px;color:#c9c9c9">Balance</span>
<div id="bal" class="abs"></div>
<span class="t sb" style="left:513.2px;top:401px;font-size:9.2px">130</span>
<div id="gen" class="abs"></div>
<span class="t sb" style="left:571.2px;top:401px;font-size:9.2px">Generate</span>
<span class="t sb" style="left:630.6px;top:401px;font-size:8.9px">10</span>
<div id="next" class="abs"></div>
<!-- icons -->
<svg class="abs" style="left:290px;top:29px" width="12" height="12" viewBox="0 0 12 12" fill="none"><g transform="translate(0.2 0.3)"><rect x="1.1" y="1.1" width="9" height="9" rx="1.4" stroke="#fff" stroke-width="1.2"/><path d="M2.6 8.4 L4.1 6.5 L4.9 7.3 L6.5 5.4 L8.6 8.4Z" fill="#fff"/></g></svg>
<span class="t" style="left:367.1px;top:36.2px;font-family:'Liberation Serif',serif;font-size:11.6px;color:#c6c6c6">T</span>
<svg class="abs" style="left:271px;top:76px" width="12" height="12" viewBox="0 0 12 12" fill="none"><g transform="translate(0.0 0.0)"><circle cx="5.1" cy="5.2" r="3.9" stroke="#e2e2e2" stroke-width="1"/><rect x="4.55" y="4.5" width="1.1" height="2.7" fill="#e2e2e2"/><rect x="4.55" y="2.8" width="1.1" height="1.1" fill="#e2e2e2"/></g></svg>
<svg class="abs" style="left:167px;top:207px" width="16" height="16" viewBox="0 0 16 16" fill="none"><g transform="translate(0.0 0.0)"><circle cx="7.1" cy="7.2" r="5.75" stroke="#e6ad1e" stroke-width="1.15"/><rect x="6.4" y="6.3" width="1.4" height="3.7" fill="#e6ad1e"/><rect x="6.4" y="4.2" width="1.4" height="1.4" fill="#e6ad1e"/></g></svg>
<svg class="abs" style="left:622px;top:134px" width="13" height="13" viewBox="0 0 13 13" fill="none"><g transform="translate(0.0 0.0)"><path d="M1.4 1.8 L9.8 10.2 M9.8 1.8 L1.4 10.2" stroke="#fff" stroke-width="1.3"/></g></svg>
<svg class="abs" style="left:54px;top:261px" width="9" height="9" viewBox="0 0 9 9" fill="none"><g transform="translate(0.0 0.0)"><path d="M3 1.5 H5 M3.4 1.5 V3 L1.4 6.4 H6.6 L4.6 3 V1.5 M2.4 5 H5.6" stroke="#5aa2e6" stroke-width="0.75" stroke-linejoin="round" stroke-linecap="round"/></g></svg>
<svg class="abs" style="left:56px;top:343px" width="11" height="11" viewBox="0 0 11 11" fill="none"><g transform="translate(0.0 0.0)"><path d="M6 2.6 Q6.3 5.4 9 5.7 Q6.3 6 6 8.8 Q5.7 6 3 5.7 Q5.7 5.4 6 2.6Z M2.5 1.2 Q2.6 2.3 3.7 2.4 Q2.6 2.5 2.5 3.6 Q2.4 2.5 1.3 2.4 Q2.4 2.3 2.5 1.2Z" fill="#8a8a8a"/></g></svg>
<svg class="abs" style="left:236px;top:286px" width="11" height="10" viewBox="0 0 11 10" fill="none"><g transform="translate(0.8 0.3)"><path d="M0.7 3.3 V0.7 H3.3 M6.000000000000002 0.7 H8.600000000000001 V3.3 M8.600000000000001 5.199999999999999 V7.8 H6.000000000000002 M3.3 7.8 H0.7 V5.199999999999999" stroke="#fff" stroke-width="1.4"/></g></svg>
<svg class="abs" style="left:301px;top:286px" width="16" height="10" viewBox="0 0 16 10" fill="none"><g transform="translate(0.5 0.0)"><path d="M2.2 0.9 Q1.2 0.9 1.3 2.2 Q1.5 4 0.5 4.5 Q1.5 5 1.3 6.8 Q1.2 8.1 2.2 8.1 M12.8 0.9 Q13.8 0.9 13.7 2.2 Q13.5 4 14.5 4.5 Q13.5 5 13.7 6.8 Q13.8 8.1 12.8 8.1" stroke="#fff" stroke-width="0.9"/><path d="M3.9 2.9 h1.6 l0.7 -0.9 h2.6 l0.7 0.9 h1.6 v4.6 h-7.2z" stroke="#fff" stroke-width="0.95"/><circle cx="7.5" cy="5.1" r="1.3" stroke="#fff" stroke-width="0.9"/></g></svg>
<svg class="abs" style="left:385px;top:286px" width="13" height="10" viewBox="0 0 13 10" fill="none"><g transform="translate(0.4 0.4)"><path d="M3 0.6 H8.6 L10 4.3 V7.9 H1.6 V4.3Z M0.3 4.3 H11.3" stroke="#5e5e5e" stroke-width="0.95" stroke-linejoin="round"/></g></svg>
<svg class="abs" style="left:444px;top:286px" width="13" height="10" viewBox="0 0 13 10" fill="none"><g transform="translate(0.7 0.2)"><path d="M1.6 0.6 H10 V4.3 L8.9 7.9 H2.7 L1.6 4.3Z M0.3 4.3 H11.3" stroke="#fff" stroke-width="0.95" stroke-linejoin="round"/></g></svg>
<svg class="abs" style="left:519px;top:286px" width="14" height="10" viewBox="0 0 14 10" fill="none"><g transform="translate(0.4 0.2)"><path d="M9 6.4 C11.5 6 12.5 5 12.5 3.9 C12.5 2.5 9.9 1.6 6.6 1.6 C3.3 1.6 0.8 2.5 0.8 3.9 C0.8 5 2.2 6 4.6 6.4" stroke="#fff" stroke-width="1.05" stroke-linecap="round"/><path d="M4.3 4.8 L6.7 6.6 L4.3 8.4Z" fill="#fff"/></g></svg>
<svg class="abs" style="left:591px;top:284px" width="11" height="13" viewBox="0 0 11 13" fill="none"><g transform="translate(0.8 0.7)"><path d="M5 1.9 H1 V10.1 H5" stroke="#fff" stroke-width="1.05" stroke-linejoin="round"/><path d="M5 0.4 V3.6 M5 4.6 V5.5 M5 6.5 V7.4 M5 8.4 V11.6" stroke="#fff" stroke-width="1.05"/><path d="M5 2.3 L8.3 3 V9 L5 9.7" stroke="#fff" stroke-width="0.85" stroke-linejoin="round"/></g></svg>
<svg class="abs" style="left:247px;top:339px" width="12" height="12" viewBox="0 0 12 12" fill="none"><g transform="translate(0.5 0.4)"><circle cx="5" cy="5.1" r="4.2" stroke="#fff" stroke-width="1"/><path d="M8 8.1 L10.1 10.2" stroke="#fff" stroke-width="1.05" stroke-linecap="round"/><path d="M3 5.1 H7" stroke="#fff" stroke-width="1"/><path d="M5 3.1 V7.1" stroke="#fff" stroke-width="1"/></g></svg>
<svg class="abs" style="left:308px;top:339px" width="12" height="12" viewBox="0 0 12 12" fill="none"><g transform="translate(0.5 0.4)"><circle cx="5" cy="5.1" r="4.2" stroke="#6a6a6a" stroke-width="1"/><path d="M8 8.1 L10.1 10.2" stroke="#6a6a6a" stroke-width="1.05" stroke-linecap="round"/><path d="M3 5.1 H7" stroke="#6a6a6a" stroke-width="0.9"/></g></svg>
<svg class="abs" style="left:389px;top:340px" width="10" height="10" viewBox="0 0 10 10" fill="none"><g transform="translate(0.0 0.3)"><path d="M0.6 2.9 V0.6 H2.9 M6.1000000000000005 0.6 H8.4 V2.9 M8.4 5.500000000000001 V7.800000000000001 H6.1000000000000005 M2.9 7.800000000000001 H0.6 V5.500000000000001" stroke="#5e5e5e" stroke-width="1.2"/><circle cx="4.5" cy="4.2" r="1.7" fill="#5e5e5e"/></g></svg>
<svg class="abs" style="left:450px;top:340px" width="10" height="10" viewBox="0 0 10 10" fill="none"><g transform="translate(0.6 0.3)"><path d="M0.6 2.9 V0.6 H2.9 M6.1000000000000005 0.6 H8.4 V2.9 M8.4 5.500000000000001 V7.800000000000001 H6.1000000000000005 M2.9 7.800000000000001 H0.6 V5.500000000000001" stroke="#5e5e5e" stroke-width="1.2"/><circle cx="4.5" cy="4.2" r="1.7" fill="#5e5e5e"/></g></svg>
<svg class="abs" style="left:528px;top:340px" width="8" height="9" viewBox="0 0 8 9" fill="none"><g transform="translate(0.4 0.3)"><path d="M3.2 0.5 L6 3.5 H3.95 V7.8 H2.45 V3.5 H0.4Z" fill="#707070"/></g></svg>
<svg class="abs" style="left:587px;top:340px" width="8" height="9" viewBox="0 0 8 9" fill="none"><g transform="translate(0.7 0.3)"><path d="M3.2 7.6 L6 4.6 H3.95 V0.3 H2.45 V4.6 H0.4Z" fill="#707070"/></g></svg>
<svg class="abs" style="left:47px;top:395px" width="13" height="12" viewBox="0 0 13 12" fill="none"><g transform="translate(0.5 0.7)"><path d="M0.3 2.2 H7 M8.6 2.2 H10.2 M7.6 0.8 V3.6 M0.3 5.5 H2.2 M3.9 5.5 H10.2 M2.9 4.1 V6.9 M0.3 8.7 H4.7 M6.3 8.7 H10.2 M5.3 7.3 V10.1" stroke="#fff" stroke-width="1.15"/></g></svg>
<svg class="abs" style="left:495px;top:395px" width="15" height="12" viewBox="0 0 15 12" fill="none"><g transform="translate(0.7 0.3)"><circle cx="9" cy="5.5" r="3.35" stroke="#4fa3ea" stroke-width="0.9"/><path d="M7.8 3.8 L10.6 5.5 L7.8 7.2Z" fill="#4fa3ea"/><path d="M4.5 2.2 A3.6 3.6 0 0 0 4.5 8.8" stroke="#4fa3ea" stroke-width="1"/></g></svg>
<svg class="abs" style="left:612px;top:395px" width="15" height="12" viewBox="0 0 15 12" fill="none"><g transform="translate(0.9 0.3)"><circle cx="9" cy="5.5" r="3.35" stroke="#ffffff" stroke-width="0.9"/><path d="M7.8 3.8 L10.6 5.5 L7.8 7.2Z" fill="#ffffff"/><path d="M4.5 2.2 A3.6 3.6 0 0 0 4.5 8.8" stroke="#ffffff" stroke-width="1"/></g></svg>
</div>
</body>
</html>
